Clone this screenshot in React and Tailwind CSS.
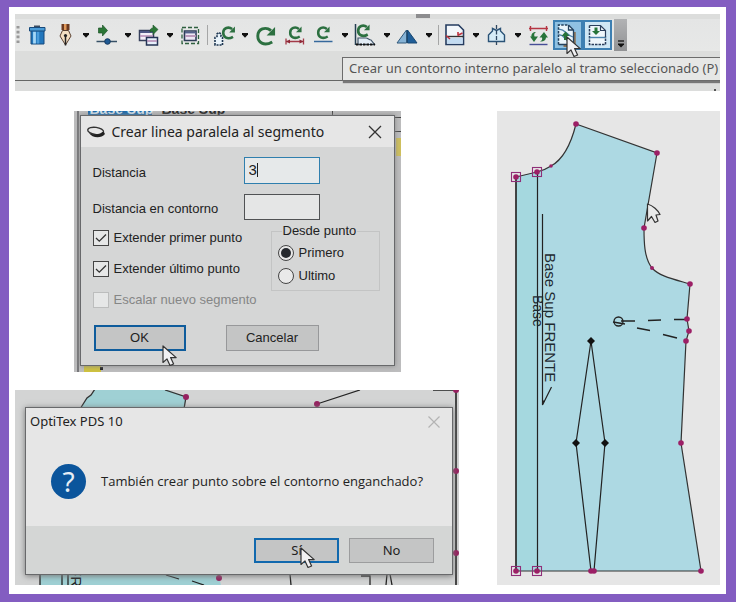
import React from "react";

const Rotate = ({ x, y, s = 1, w = 3 }) => (
  <g transform={`translate(${x} ${y}) scale(${s})`}>
    <path d="M14.500 14.200C7 18.500 1.600 14.500 1.600 9C1.600 2.500 8.500.2 13.400 4" fill="none" stroke="#2c7040" strokeWidth={w} />
    <path d="M17 .8v7.700H9.500z" fill="#2c7040" />
  </g>
);

const Icon = ({ children }) => (
  <svg viewBox="0 0 24 24" className="block size-6" aria-hidden="true">
    {children}
  </svg>
);

const Tool = ({ label, children, className = "" }) => (
  <button type="button" aria-label={label} className={`shrink-0 ${className}`}>
    <Icon>{children}</Icon>
  </button>
);

const Caret = () => (
  <button type="button" aria-label="Más opciones" className="flex h-6 w-[18px] shrink-0 items-center justify-center">
    <svg viewBox="0 0 6 5" className="h-[5px] w-1.5" aria-hidden="true">
      <path d="M0 0h6v1.500L3 4.800 0 1.500z" fill="#111" />
    </svg>
  </button>
);

const Separator = () => <span className="mr-1 h-5 w-px shrink-0 bg-[#a5a6a6]" />;

const Cursor = ({ className }) => (
  <svg viewBox="0 0 16 22" className={`pointer-events-none absolute h-[22px] w-4 ${className}`} aria-hidden="true">
    <path d="M1 1v16.500l4-3.600 3 6.600 3.600-1.500-3-6.400h5.600z" fill="#f1f1f3" stroke="#333" strokeWidth="1.200" strokeLinejoin="round" />
  </svg>
);

function Toolbar() {
  return (
    <section className="relative h-[77px] overflow-hidden bg-[#dcdddc] pt-[5px]">
      <div className="flex h-8 items-center bg-linear-to-b from-[#e4e5e5] to-[#e7e8e7]" role="toolbar" aria-label="Herramientas">
        <svg viewBox="0 0 4 20" className="mr-[5px] ml-px h-5 w-1 shrink-0" aria-hidden="true">
          <path d="M2 1v20" stroke="#999" strokeWidth="3" strokeDasharray="2.6 2.2" />
        </svg>
        <Tool label="Borrar">
          <path d="M9 2.500h6V5H9z" fill="#3a4c60" />
          <path d="M6 7.500h13V21H6z" fill="#2277bd" stroke="#174a7c" />
          <path d="M9.500 8.500v12" stroke="#a5d7f6" strokeWidth="2.800" />
          <path d="M13 8.500v12" stroke="#4b9ddb" strokeWidth="2.500" />
          <path d="M4.500 4.500h15.500v3.500h-15.500z" fill="#4a9bd6" stroke="#174a7c" />
        </Tool>
        <Tool label="Pluma" className="ml-1">
          <path d="M8.500 1h8v6h-8z" fill="#6b3a20" />
          <path d="M11 1h2.500v6H11z" fill="#e0995a" />
          <path d="M9.500 7.500h6l2.500 5.500-5.500 9-5.500-9z" fill="#f3dfc2" stroke="#5b4232" />
          <path d="M12.500 12v10.500" stroke="#222" strokeWidth="1.500" />
          <circle cx="12.500" cy="12.500" r="1.600" fill="#222" />
        </Tool>
        <Caret />
        <Tool label="Mover punto">
          <path d="M3.500 5h4V2l5 5.500-5 5.500v-3h-4z" fill="#2b7636" stroke="#1c5428" strokeWidth=".7" />
          <path d="M1.500 18.500h20.500" stroke="#365066" strokeWidth="1.500" />
          <circle cx="12.500" cy="18.500" r="2.800" fill="#1f5a94" stroke="#17395f" />
        </Tool>
        <Caret />
        <Tool label="Mover pieza">
          <path d="M2.500 7.500h14v10h-14z" fill="#f3eff8" stroke="#36405c" strokeWidth="1.500" />
          <path d="M3 9h13" stroke="#4e5985" strokeWidth="2" />
          <path d="M3 13h13" stroke="#b48bb4" strokeWidth="1.500" />
          <path d="M9.500 14.500h11v7.500h-11z" fill="#e6effa" stroke="#253456" strokeWidth="1.500" />
          <path d="M10 18h10" stroke="#b287b0" strokeWidth="1.500" />
          <path d="M13 9c0-3 1-4 3-4V2l5 4.500-5 5V8.500c-1 0-2 0-3 .5z" fill="#2b7636" stroke="#1d552a" strokeWidth=".6" />
        </Tool>
        <Caret />
        <Tool label="Seleccionar" className="mr-1">
          <path d="M3 4.500h16.500v16H3z" fill="none" stroke="#2f6140" strokeWidth="1.300" strokeDasharray="4 2" />
          <path d="M5.500 8h11.500v9.500H5.500z" fill="#ece7f4" stroke="#2d3d57" strokeWidth="1.600" />
          <path d="M6 9.500h11" stroke="#55628c" strokeWidth="1.800" />
          <path d="M6 13h11" stroke="#b691b6" strokeWidth="1.800" />
        </Tool>
        <Separator />
        <Tool label="Girar pieza">
          <path d="M3 22v-7.500l2-1V11l2-1.500L9 11v2.500l1.500 1V22z" fill="#eaf4fb" stroke="#1c3550" strokeWidth="1.600" strokeDasharray="2 1" />
          <Rotate x={10} y={3} s={0.76} w={3.400} />
        </Tool>
        <Caret />
        <Tool label="Girar">
          <Rotate x={2} y={3} s={1.120} w={2.600} />
        </Tool>
        <Tool label="Girar segmento" className="ml-[5px]">
          <Rotate x={6} y={3} s={0.740} w={3.400} />
          <path d="M3 15.500v6M20.500 15.500v6M3 18.500h17.500" stroke="#a33a48" strokeWidth="1.300" />
          <path d="M3 18.500l4-2v4zM20.500 18.500l-4-2v4z" fill="#8e2836" />
        </Tool>
        <Tool label="Girar base" className="ml-[5px]">
          <Rotate x={5} y={3} s={0.740} w={3.400} />
          <path d="M2 18.500h18.500" stroke="#36699c" strokeWidth="1.500" />
        </Tool>
        <Caret />
        <Tool label="Girar a eje">
          <path d="M1.500 1v21" stroke="#253f52" strokeWidth="1.500" />
          <Rotate x={3} y={1} s={0.740} w={3.600} />
          <path d="M4 21.500v-6.500h8c2 0 3 2 5 2l3.500 4.500z" fill="#e3edf6" stroke="#3d5267" strokeWidth="1.200" />
          <path d="M2 21.500h19" stroke="#111" strokeWidth="2" strokeDasharray="2.500 1" />
        </Tool>
        <Caret />
        <Tool label="Reflejar">
          <path d="M10.500 7v13H1z" fill="#86b3d6" stroke="#31597b" />
          <path d="M11.500 7v13H21z" fill="#1f5e98" stroke="#184872" />
        </Tool>
        <Caret />
        <Separator />
        <Tool label="Cortar pieza">
          <path d="M3 2h12.500l5 5v14.500H3z" fill="#f3f7fb" stroke="#253c60" strokeWidth="1.600" />
          <path d="M4 15h15.700v5.700H4z" fill="#c3dcf2" />
          <path d="M3 13.500h17.500" stroke="#333" strokeWidth="1.400" />
          <path d="M3 12.500l4 3.500M14.500 12.500l5-2.500M15 9v3.500" stroke="#be3440" strokeWidth="1.600" />
        </Tool>
        <Caret />
        <Tool label="Abrir pieza">
          <path d="M3.500 18.500v-6.500L7.500 8V5.500l4 2 4-2V8l4 4v6.500z" fill="#d7edf8" stroke="#2a5276" strokeWidth="1.400" />
          <path d="M11.500 2v20" stroke="#2f4860" strokeWidth="1.300" strokeDasharray="4 1.500" />
        </Tool>
        <Caret />
        <Tool label="Comparar tramos">
          <path d="M2 5.500h19M3.500 3v5M19.500 3v5" stroke="#b53543" strokeWidth="1.400" />
          <path d="M9 9c-2 1-2 3-1.500 4.500H11L7 19l-4-5.500h1.500C4 11 6 9 9 9z" fill="#267439" />
          <path d="M13 18.500c2-1 2.500-2 2-4h-2.500L17 9l4 5.500h-2c0 3-3 4.500-6 4z" fill="#267439" />
          <path d="M2.500 21.500h18" stroke="#464e96" strokeWidth="1.400" />
        </Tool>
        <button type="button" aria-label="Contorno paralelo" aria-pressed="true" className="ml-0.5 flex h-[30px] w-[30px] shrink-0 items-center justify-center border-2 border-[#3d7fb2] bg-[#8fc1e2]">
          <Icon>
            <path d="M18.500 9v14h-11" fill="none" stroke="#8c7459" strokeWidth="2.500" />
            <path d="M2.500 2h10l5 5v14.500h-15z" fill="#eaf5fb" />
            <path d="M2.500 21.500V2h10" fill="none" stroke="#24425e" strokeWidth="1.500" strokeDasharray="2.500 1.200" />
            <path d="M12.500 2v5h5M12.500 2l5 5v14.500h-15" fill="none" stroke="#24425e" strokeWidth="1.300" />
            <path d="M3 6.500c6-1 6 5 14 7.500M3 12c5-1 6 6 12 8" fill="none" stroke="#4c7fa6" strokeWidth="1.300" />
            <path d="M9.500 8.500l4 4.500h-2.500v4H8v-4H5.500z" fill="#267439" />
          </Icon>
        </button>
        <button type="button" aria-label="Contorno interno" aria-pressed="true" className="flex h-[30px] w-[29px] shrink-0 items-center justify-center border-2 border-[#3d7fb2] bg-[#cfe7f5]">
          <Icon>
            <path d="M3.500 2.500h11l5 5v14h-16z" fill="#eef6fb" />
            <path d="M14.500 2.500v5h5M3.500 2.500h11l5 5v7" fill="none" stroke="#2b3f5c" strokeWidth="1.200" />
            <path d="M3.500 2.500v19h16v-8" fill="none" stroke="#2b3f5c" strokeWidth="1.500" strokeDasharray="2.500 1" />
            <path d="M3.500 14.500h16" stroke="#4a83ac" strokeWidth="1.400" />
            <path d="M8.500 4.500h3v3.500H14l-4 4-4-4h2.500z" fill="#267439" />
          </Icon>
        </button>
        <button type="button" aria-label="Opciones de barra" className="ml-0.5 flex h-8 w-[13px] shrink-0 items-end justify-center bg-linear-to-b from-[#b2b3b5] to-[#919294] pb-[3px]">
          <svg viewBox="0 0 8 8" className="size-2" aria-hidden="true">
            <path d="M1 1h6" stroke="#111" strokeWidth="1.300" />
            <path d="M1 3.500h6v1L4 7.500l-3-3z" fill="#111" />
          </svg>
        </button>
      </div>
      <span className="absolute top-0 left-[401px] h-1 w-3.5 bg-[#8d8d8f]" />
      <span className="absolute top-[66px] left-0 h-px w-full bg-[#656665]" />
      <span className="absolute right-1 bottom-0 h-0.5 w-0.5 bg-[#555]" />
      <div role="tooltip" className="absolute top-[43px] right-0 flex h-6 w-[378px] items-center border border-r-0 border-[#6c6c6c] bg-[#e6e7e6] pl-1.5 font-['Noto_Sans',sans-serif] text-[13px] whitespace-nowrap text-[#555] shadow-[1px_2px_1px_#777]">
        Crear un contorno interno paralelo al tramo seleccionado (P)
      </div>
      <Cursor className="top-[22px] left-[551px]" />
    </section>
  );
}

const Check = ({ id, label, checked, disabled }) => (
  <div className="flex h-4 items-center gap-[5px]">
    <span className="grid size-4 shrink-0 place-items-center">
      <input
        id={id}
        type="checkbox"
        defaultChecked={checked}
        disabled={disabled}
        className="peer col-start-1 row-start-1 size-4 appearance-none border border-[#444] bg-[#e6e7e7] disabled:border-[#bcbdbd]"
      />
      <svg viewBox="0 0 12 12" className="pointer-events-none col-start-1 row-start-1 hidden size-3 peer-checked:block" aria-hidden="true">
        <path d="M1 6l3.300 3.200L11 2.500" fill="none" stroke="#333" strokeWidth="1.300" />
      </svg>
    </span>
    <label htmlFor={id} className={disabled ? "whitespace-nowrap text-[#858686]" : "whitespace-nowrap"}>
      {label}
    </label>
  </div>
);

const Radio = ({ id, label, checked }) => (
  <div className="flex h-4 items-center gap-[5px]">
    <span className="grid size-4 shrink-0 place-items-center">
      <input
        id={id}
        type="radio"
        name="desde"
        defaultChecked={checked}
        className="peer col-start-1 row-start-1 size-4 appearance-none rounded-full border border-[#444] bg-[#e9e9e9]"
      />
      <span className="pointer-events-none col-start-1 row-start-1 hidden size-2.5 rounded-full bg-[#26292e] peer-checked:block" />
    </span>
    <label htmlFor={id}>{label}</label>
  </div>
);

function ParallelDialog() {
  return (
    <section className="relative mx-auto h-[261px] w-[327px] max-w-full overflow-hidden bg-[#bdbdbe] pt-1 pr-1.5 pl-1.5 font-['Liberation_Sans',Arial,sans-serif] text-[13px] leading-4 text-[#222]">
      <div className="absolute top-0 left-3.5 flex h-1 items-end overflow-hidden text-[14px] leading-3 font-bold whitespace-nowrap" aria-hidden="true">
        <span className="w-16 bg-[#1668ad] pl-0.5 text-[#d8e8f5]">Base Sup</span>
        <span className="pl-2.5">Base Sup</span>
      </div>
      <span className="absolute top-0 left-[3px] h-full w-0.5 bg-[#77777a]" />
      <span className="absolute top-0 left-[258px] h-1 w-px bg-[#444]" />
      <span className="absolute top-1.5 right-0 h-px w-1.5 bg-[#444]" />
      <span className="absolute top-5 right-0 h-px w-1.5 bg-[#444]" />
      <span className="absolute top-[27px] right-0 h-[18px] w-[5px] bg-[#cfc05d]" />
      <span className="absolute bottom-0 left-2.5 h-2 w-[17px] bg-[#cfc23f]" />
      <span className="absolute bottom-0.5 left-[26px] size-[3px] bg-[#222]" />
      <form className="relative border border-[#68696b] bg-[#d5d6d6] shadow-[0_0_5px_#888]" onSubmit={(e) => e.preventDefault()}>
        <header className="flex h-[31px] items-center bg-[#e6e6e6] pr-3 pl-[5px]">
          <svg viewBox="0 0 20 12" className="h-3 w-5 shrink-0" aria-hidden="true">
            <ellipse cx="9.500" cy="5" rx="8" ry="3.600" transform="rotate(8 10 6)" fill="none" stroke="#333" strokeWidth="1.400" />
            <path d="M3 7c3 5 12 6 16 1-1-2-2-2-3-2-1 2-6 4-13 1z" fill="#222" />
          </svg>
          <h2 className="ml-1.5 flex-1 font-['Noto_Sans',sans-serif] text-[14px] whitespace-nowrap">Crear linea paralela al segmento</h2>
          <button type="button" aria-label="Cerrar">
            <svg viewBox="0 0 14 14" className="size-3.5" aria-hidden="true">
              <path d="M1 1l12 12M13 1L1 13" stroke="#333" strokeWidth="1.300" />
            </svg>
          </button>
        </header>
        <div className="pt-2.5 pr-3.5 pb-3.5 pl-3">
          <div className="flex items-center">
            <label htmlFor="distancia" className="w-[151px] pt-1">Distancia</label>
            <span className="relative">
              <input id="distancia" defaultValue="3" className="block h-[27px] w-[76px] border border-[#2f7fae] bg-[#e6e9ea] pb-0.5 pl-1 text-[15px]" />
              <span className="absolute top-1.5 left-[13px] h-3.5 w-px bg-[#222]" />
            </span>
          </div>
          <div className="mt-2.5 flex items-center">
            <label htmlFor="contorno" className="w-[151px] pt-1 whitespace-nowrap">Distancia en contorno</label>
            <input id="contorno" className="block h-[26px] w-[76px] border border-[#505254] bg-[#e5e6e6] pl-1" />
          </div>
          <div className="flex items-start justify-between">
            <div className="flex flex-col gap-[15px] pt-2.5">
              <Check id="primer" label="Extender primer punto" checked />
              <Check id="ultimo-punto" label="Extender último punto" checked />
              <Check id="escalar" label="Escalar nuevo segmento" disabled />
            </div>
            <fieldset className="mt-[3px] w-[109px] shrink-0 border border-[#c3c4c4] pb-1.5 pl-1.5">
              <legend className="ml-1 px-px whitespace-nowrap">Desde punto</legend>
              <div className="flex flex-col gap-[7px] pt-1.5">
                <Radio id="primero" label="Primero" checked />
                <Radio id="ultimo" label="Ultimo" />
              </div>
            </fieldset>
          </div>
          <div className="mt-[17px] flex gap-10">
            <button type="submit" className="ml-px h-[26px] w-[92px] border-2 border-[#0e5c9c] bg-[#c4c5c5]">
              OK
            </button>
            <button type="button" className="h-[26px] w-[93px] border border-[#97989a] bg-[#c4c5c5]">
              Cancelar
            </button>
          </div>
        </div>
        <Cursor className="-bottom-0.5 left-[81px]" />
      </form>
    </section>
  );
}

function QuestionDialog() {
  return (
    <section className="relative h-[195px] overflow-hidden bg-[#d3d4d4] pt-[17px] pr-1.5 pl-2.5 font-['Noto_Sans',sans-serif] text-[#222]">
      <svg viewBox="0 0 444 195" preserveAspectRatio="xMinYMin slice" className="absolute inset-0 h-full w-full" aria-hidden="true">
        <path d="M65 19l7-11 4-3 4-6h70l21 8-2 12z" fill="#9fd0d4" />
        <path d="M65 19l7-11 4-3 4-6M150 0l21 7-2 12" fill="none" stroke="#333" strokeWidth="1.300" />
        <path d="M25 184v12h181l-2-12z" fill="#9fd0d4" />
        <path
          d="M25 184v12M47 184v11M53 184v11M151 185l13 4M177 191l12 4M302 14l43-14M418 0h22M275 184l1 11M346 186h9v9M372 184l-1 11M375 184l2 11"
          fill="none"
          stroke="#222"
          strokeWidth="1.300"
        />
        <text transform="translate(56 177) rotate(90)" fontFamily="Liberation Sans, Arial, sans-serif" fontSize="15" fill="#222">FR</text>
        <path d="M441 0v195" stroke="#222" strokeWidth="1.600" />
        <g fill="#96205f">
          <circle cx="171" cy="7" r="3" />
          <circle cx="204" cy="188" r="3" />
          <circle cx="302" cy="14" r="3" />
          <circle cx="441" cy="0" r="3" />
          <circle cx="441" cy="81" r="3" />
          <circle cx="441" cy="163" r="3" />
        </g>
      </svg>
      <div role="dialog" aria-label="OptiTex PDS 10" className="relative border border-[#68696b] bg-[#e6e6e6] shadow-[0_1px_6px_#777]">
        <header className="flex h-7 items-center justify-between pr-3 pl-1">
          <h2 className="text-[13px]">OptiTex PDS 10</h2>
          <button type="button" aria-label="Cerrar">
            <svg viewBox="0 0 12 12" className="size-3" aria-hidden="true">
              <path d="M.5.5l11 11M11.500.5L.5 11.500" stroke="#b3b3b3" strokeWidth="1.200" />
            </svg>
          </button>
        </header>
        <div className="flex h-[90px] items-center gap-[15px] pl-[25px]">
          <span className="flex size-[35px] shrink-0 items-center justify-center rounded-full bg-[#0b559c] text-[28px] leading-none text-[#e6eef5]">?</span>
          <p className="pt-0.5 font-['Open_Sans',sans-serif] text-[13px] whitespace-nowrap">También crear punto sobre el contorno enganchado?</p>
        </div>
        <footer className="flex h-12 items-center justify-end gap-2.5 bg-[#d4d6d5] pr-[18px] text-[13px]">
          <button type="button" className="relative h-[25px] w-[85px] border-2 border-[#1169ae] bg-[#c4c5c5] leading-5">
            Sí
            <Cursor className="top-[7px] left-11" />
          </button>
          <button type="button" className="h-[25px] w-[85px] border border-[#9c9d9e] bg-[#c4c5c5] leading-5">
            No
          </button>
        </footer>
      </div>
    </section>
  );
}

const contour = "M19 66L40 61Q48 59 54 55C67 48 74 33 79 13L160 42L147 117C147 130 147 147 155 157C162 165 176 168 193 173L190 208L192 220L189 230L184 332L204 460H19Z";
const points = [[19, 66], [40, 61], [79, 13], [160, 42], [147, 117], [193, 173], [190, 208], [192, 220], [189, 230], [184, 332], [204, 460], [94, 460], [97, 460], [40, 460], [19, 460]];
const corners = [[19, 66], [40, 61], [40, 460], [19, 460]];
const darts = [[94, 230], [79, 332], [108, 332]];

function Pattern() {
  return (
    <section className="relative bg-[#e6e6e6]">
      <svg viewBox="0 0 223 474" className="block w-full" role="img" aria-label="Base Sup FRENTE">
        <path d={contour} fill="#add9e3" stroke="#333" strokeWidth="1.200" />
        <path d="M20 67l20-5v397H20z" fill="#a5d8df" />
        <path d="M19 66v394M40.500 61v399M45.500 103v191l9-18" fill="none" stroke="#222" strokeWidth="1.200" />
        <path d="M45 294v-5l3 1z" fill="#222" />
        <path d="M94 230L79 332L94 460M94 230L108 332L97 460" fill="none" stroke="#222" strokeWidth="1.200" />
        <circle cx="121.500" cy="210.500" r="4.500" fill="none" stroke="#222" strokeWidth="1.300" />
        <path d="M116 211l12 2M124 210h14M151 209.500l13-.5M177 208.500h12M140 217l13 2.500M166 223.500l14 3.500" stroke="#222" strokeWidth="1.300" />
        <g fontFamily="Liberation Sans, Arial, sans-serif" fill="#1e2a30">
          <text transform="translate(48 142) rotate(90)" fontSize="15">Base Sup FRENTE</text>
          <text transform="translate(36 184) rotate(90)" fontSize="14">Base</text>
        </g>
        {points.map(([x, y], i) => (
          <circle key={i} cx={x} cy={y} r="2.800" fill="#9c1f66" />
        ))}
        <circle cx="54" cy="55" r="1.800" fill="#9c1f66" />
        <circle cx="155" cy="157" r="2" fill="#9c1f66" />
        {corners.map(([x, y], i) => (
          <rect key={i} x={x - 4.5} y={y - 4.5} width="9" height="9" fill="none" stroke="#8f2f78" strokeWidth="1.100" />
        ))}
        {darts.map(([x, y], i) => (
          <path key={i} d={`M${x - 4} ${y}l4-4 4 4-4 4z`} fill="#111" />
        ))}
        <path d="M150.500 93v17l4-4.500 3.500 6 3-1.500-2-6 4-.5c-2-4-7-9-12.500-10.500z" fill="#e9eaea" stroke="#333" strokeWidth="1.200" strokeLinejoin="round" />
      </svg>
    </section>
  );
}

export default function App() {
  return (
    <main className="bg-[#835dc1] pt-[7px] pr-2.5 pb-2 pl-[9px]">
      <div className="flex flex-col gap-5 bg-white px-1.5 pt-[7px] pb-[9px]">
        <Toolbar />
        <div className="grid grid-cols-[minmax(0,1fr)_223px] items-start gap-[38px]">
          <div className="flex flex-col gap-[18px]">
            <ParallelDialog />
            <QuestionDialog />
          </div>
          <Pattern />
        </div>
      </div>
    </main>
  );
}
